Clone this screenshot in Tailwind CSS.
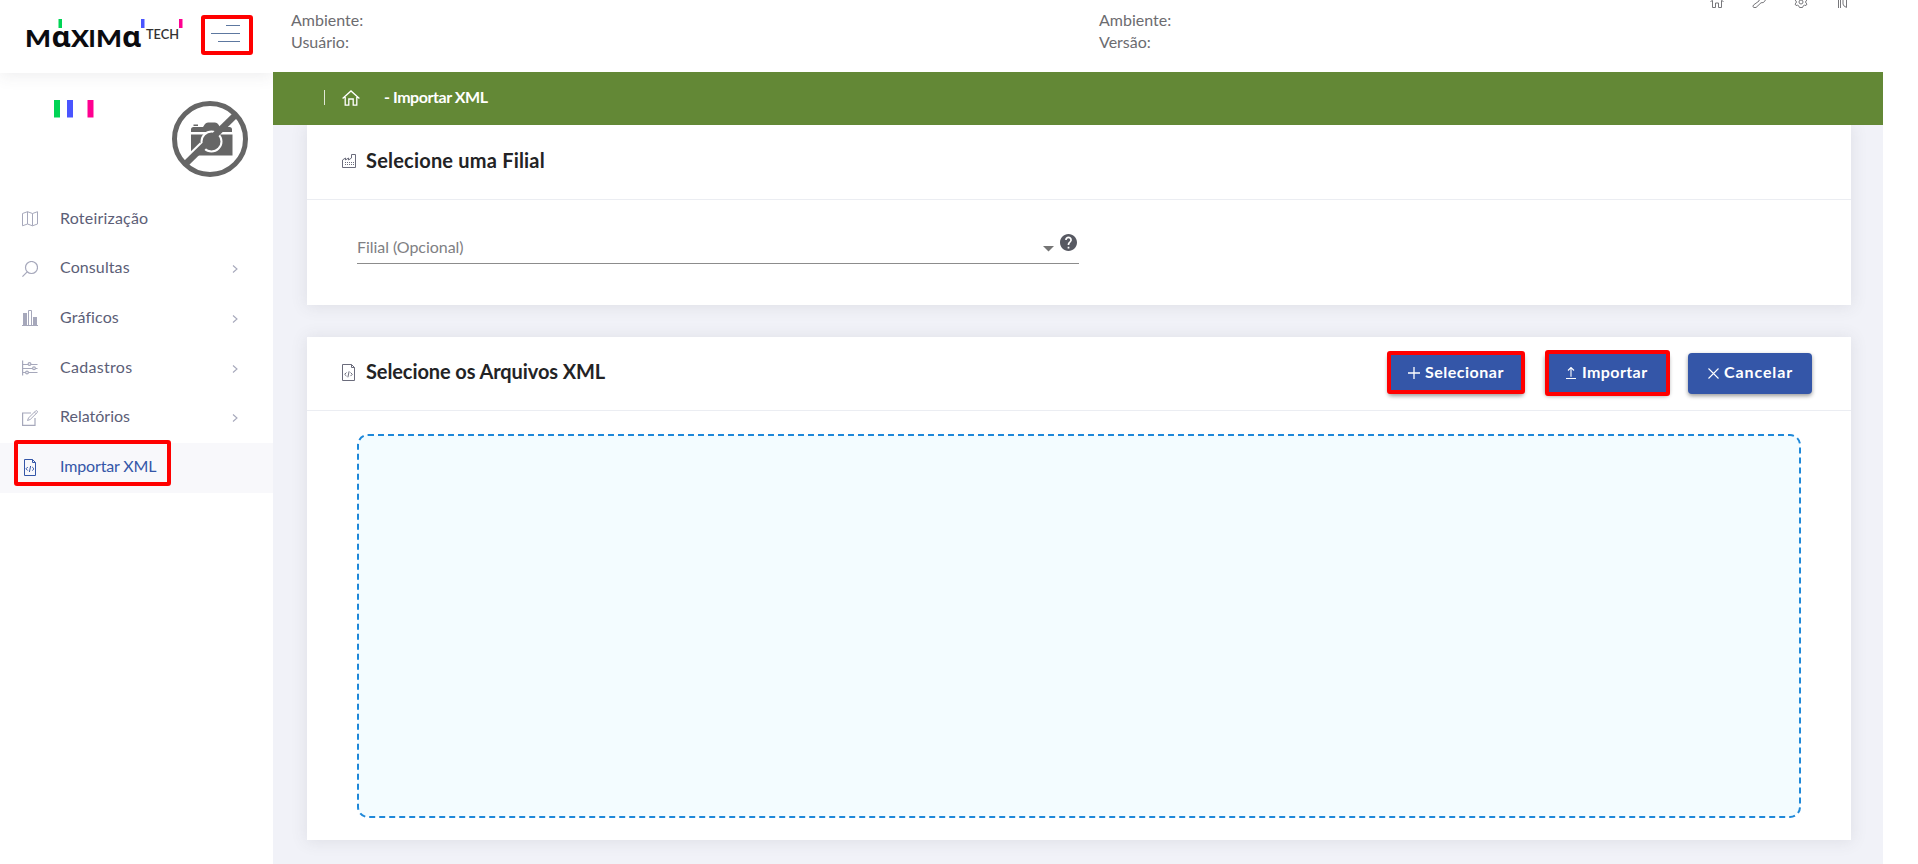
<!DOCTYPE html>
<html lang="pt-BR">
<head>
  <meta charset="utf-8">
  <title>Importar XML</title>
  <script src="https://cdn.jsdelivr.net/npm/@tailwindcss/browser@4"></script>
</head>
<body class="w-[1918px] h-[864px] overflow-hidden bg-white font-['Lato',sans-serif] flex flex-col">

  <!-- Top bar -->
  <header class="h-[72px] shrink-0 flex bg-white">
    <div class="relative z-10 w-[273px] h-[73px] shrink-0 bg-white shadow-[0_2px_16px_rgba(69,65,78,0.10)] flex [clip-path:inset(0_0_-30px_0)]">
      <svg class="w-[201px] h-[73px]" viewBox="0 0 201 73">
        <g fill="#0b0b0f" font-family="Lato, sans-serif" font-weight="900">
          <text x="25" y="46.500" font-size="23.5" textLength="26" lengthAdjust="spacingAndGlyphs">M</text>
          <text x="51.500" y="46.500" font-family="Noto Sans, sans-serif" font-weight="700" font-size="28" textLength="19" lengthAdjust="spacingAndGlyphs">ɑ</text>
          <text x="71" y="46.500" font-size="23.5" textLength="18" lengthAdjust="spacingAndGlyphs">X</text>
          <text x="88.500" y="46.500" font-size="23.5">I</text>
          <text x="96" y="46.500" font-size="23.5" textLength="26" lengthAdjust="spacingAndGlyphs">M</text>
          <text x="122" y="46.500" font-family="Noto Sans, sans-serif" font-weight="700" font-size="28" textLength="19" lengthAdjust="spacingAndGlyphs">ɑ</text>
        </g>
        <text x="146" y="39" fill="#333" font-family="Lato, sans-serif" font-weight="600" font-size="13" textLength="33" lengthAdjust="spacingAndGlyphs">TECH</text>
        <path fill="#00d455" d="M58.5 19h3.5v9h-3.5z"/>
        <path fill="#4a55ff" d="M141 19h3.5v9h-3.5z"/>
        <path fill="#ff0090" d="M179 19h3.5v9h-3.5z"/>
      </svg>
      <div class="mt-[15px] w-[52px] h-10 rounded-[3px] border-4 border-[#ff0000] flex flex-col items-end pt-[6px] pr-[9px] gap-[7px]">
        <span class="h-px w-[14px] bg-[#5d78a0]"></span>
        <span class="h-px w-[29px] bg-[#5d78a0]"></span>
        <span class="h-px w-[22px] bg-[#5d78a0]"></span>
      </div>
    </div>
    <div class="flex-1 flex pt-[9px] text-base leading-[22px] text-[#6c6c70]">
      <div class="w-[808px] pl-[18px]">
        <p>Ambiente:</p>
        <p>Usuário:</p>
      </div>
      <div class="w-[629px] pl-[18px]">
        <p>Ambiente:</p>
        <p>Versão:</p>
      </div>
      <div class="-mt-[9px] flex gap-[28px]">
        <svg class="w-[14px] h-2" viewBox="0 6 14 8" fill="none" stroke="#77777b"><path d="M.5 8 7 1.5 13.500 8M2.500 6.500v7h3V9h3v4.500h3v-7"/></svg>
        <svg class="w-[14px] h-2" viewBox="0 6 14 8" fill="none" stroke="#77777b"><path d="M7.500 4 7 7l-5.500 4q-1.500 2 .5 2.500h2L9 8.800l2.500-.3L13.500 6"/></svg>
        <svg class="w-[14px] h-2" viewBox="0 6 14 8" fill="none" stroke="#77777b"><circle cx="7" cy="8" r="2"/><path d="m1 6 1.200 1v2L1 10l1 1.500 1.500-.3 1.500 1 .5 1.300h3l.5-1.300 1.500-1 1.500.3 1-1.500-1.200-1V7L13 6"/></svg>
        <svg class="w-[14px] h-2" viewBox="0 6 14 8" fill="none" stroke="#77777b"><path d="M2.500 2v12M4.500 2v12M7 2v8q0 2 3.500 3.500V2"/></svg>
      </div>
    </div>
  </header>

  <div class="flex-1 flex min-h-0">

    <!-- Sidebar -->
    <aside class="w-[273px] shrink-0 bg-white text-[#5c5e77] text-base">
      <div class="h-[121px]">
        <svg class="w-[273px] h-[121px]" viewBox="0 72 273 121">
          <path fill="#00d455" d="M54 100h6v17.500h-6z"/>
          <path fill="#4a55ff" d="M67 100h6v17.500h-6z"/>
          <path fill="#ff0090" d="M87.500 100h6v17.500h-6z"/>
          <g fill="#666">
            <path d="M193.500 124.500h4.500v1.500h-4.500zM191 132v-2.500q0-2.500 2.500-2.500h9.500l2-3q1-1.500 3-1.500h7q2 0 3 1.500l2 3h9.500q2.500 0 2.500 2.500v2.500zM191 134.500h41.500v21h-41.500z"/>
            <circle cx="211.500" cy="141.500" r="10" stroke="#fff" stroke-width="2"/>
          </g>
          <path d="m184 160 17-16.500M219 122l14-14" stroke="#fff" stroke-width="3"/>
          <path d="m186 163.500 50-49" stroke="#666" stroke-width="6.500"/>
          <circle cx="210" cy="139" r="35.500" fill="none" stroke="#666" stroke-width="5"/>
        </svg>
      </div>
      <nav class="flex flex-col">
        <a class="h-[49.6px] flex items-center pl-[22px]">
          <svg class="w-4 h-4 mt-[3px] mr-[22px]" viewBox="0 0 16 16" fill="none" stroke="#a6a8bb"><path d="M.5 2.500 5.500.7l5 1.800 5-1.800V13l-5 1.800-5-1.800-5 1.800zM5.500.7V13M10.500 2.500v12.300"/></svg>
          <span class="tracking-[0.2px]">Roteirização</span>
        </a>
        <a class="h-[49.6px] flex items-center pl-[22px] pr-[35px]">
          <svg class="w-4 h-4 mt-[3px] mr-[22px]" viewBox="0 0 16 16" fill="none" stroke="#a6a8bb" stroke-width="1.200"><circle cx="9.500" cy="6.500" r="6"/><path d="M5.200 10.800.4 15.600"/></svg>
          <span class="flex-1 tracking-[0.1px]">Consultas</span>
          <svg class="w-[6px] h-2 mt-[4px]" viewBox="0 0 6 8" fill="none" stroke="#a6a8bb" stroke-width="1.100"><path d="m1 .5 4 3.500-4 3.500"/></svg>
        </a>
        <a class="h-[49.6px] flex items-center pl-[22px] pr-[35px]">
          <svg class="w-4 h-4 mt-[3px] mr-[22px]" viewBox="0 0 16 16" fill="#a6a8bb"><path d="M0 15h16v1H0zM1 3h4v12H1zM11 7h4v8h-4z"/><path d="M6.500.5h3v15h-3z" fill="none" stroke="#a6a8bb"/></svg>
          <span class="flex-1 tracking-[0.1px]">Gráficos</span>
          <svg class="w-[6px] h-2 mt-[4px]" viewBox="0 0 6 8" fill="none" stroke="#a6a8bb" stroke-width="1.100"><path d="m1 .5 4 3.500-4 3.500"/></svg>
        </a>
        <a class="h-[49.6px] flex items-center pl-[22px] pr-[35px]">
          <svg class="w-4 h-4 mt-[3px] mr-[22px]" viewBox="0 0 16 16" fill="none" stroke="#a6a8bb" stroke-width="1.200"><path d="M.6.500v15M1 4.500h5M9 4.500h6.500M1 8.500h9.500M13.500 8.500h2M1 12.500h2.500M6.500 12.500h9"/><circle cx="7.500" cy="4" r="1.400"/><circle cx="12" cy="8.300" r="1.400"/><circle cx="5" cy="12.500" r="1.400"/></svg>
          <span class="flex-1 tracking-[0.3px]">Cadastros</span>
          <svg class="w-[6px] h-2 mt-[4px]" viewBox="0 0 6 8" fill="none" stroke="#a6a8bb" stroke-width="1.100"><path d="m1 .5 4 3.500-4 3.500"/></svg>
        </a>
        <a class="h-[49.6px] flex items-center pl-[22px] pr-[35px]">
          <svg class="w-4 h-4 mt-[3px] mr-[22px]" viewBox="0 0 16 16" fill="none" stroke="#a6a8bb"><path stroke-width="1.200" d="M9 3H.6v12.400H13V8"/><path d="M5.500 10.500 6.500 8l7-7q1-.8 1.700 0 .7.700 0 1.600L8.200 9.500zM12.500 2.200l1.500 1.500"/></svg>
          <span class="flex-1">Relatórios</span>
          <svg class="w-[6px] h-2 mt-[4px]" viewBox="0 0 6 8" fill="none" stroke="#a6a8bb" stroke-width="1.100"><path d="m1 .5 4 3.500-4 3.500"/></svg>
        </a>
        <a class="relative h-[50px] mt-[2px] flex items-center pl-[22px] pb-[3px] bg-[#f8f8fb] text-[#3456a8]">
          <svg class="w-4 h-[17px] mt-[3px] mr-[22px]" viewBox="0 0 16 17" fill="none" stroke="#3456a8"><path d="M2.500.5h8l3 3v13h-11zM10.500.5v3h3M5.800 8 4 9.800l1.800 1.800M10.200 8l1.800 1.800-1.800 1.800M8.600 7l-1.200 6"/></svg>
          <span class="tracking-[-0.15px]">Importar XML</span>
          <span class="absolute left-[14px] -top-[3px] w-[157px] h-[46px] rounded-[3px] border-4 border-[#ff0000]"></span>
        </a>
      </nav>
    </aside>

    <!-- Content -->
    <main class="w-[1610px] bg-[#f1f2f8] flex flex-col overflow-hidden">
      <div class="relative z-10 h-[53px] shrink-0 bg-[#638836] text-white flex items-center pl-[51px] pb-[2px]">
        <span class="w-px h-[15px] bg-white/80"></span>
        <svg class="w-[18px] h-4 ml-[17px]" viewBox="0 0 18 16" fill="none" stroke="#fff" stroke-width="1.300"><path d="M.6 8.500 9 .9l8.400 7.600M3.200 7v8.200h3.600V9h4.400v6.200h3.600V7"/></svg>
        <span class="ml-[24px] pb-px text-base font-bold tracking-[-0.45px]">- Importar XML</span>
      </div>

      <section class="mx-[34px] mr-[32px] h-[180px] shrink-0 bg-white shadow-[0_1px_15px_1px_rgba(69,65,78,0.10)]">
        <div class="h-[75px] pb-[5px] border-b border-[#ebedf2] flex items-center pl-[35px]">
          <svg class="w-[14px] h-[14px] mt-[2px] mr-[10px]" viewBox="0 0 14 14" fill="none" stroke="#6b6c7c"><path d="M.5 13.500V6l3-2v2l3-2v2l3-2V.5h4v13z"/><path stroke-dasharray="1 1" d="M3 8.500h9M3 10.500h9"/></svg>
          <h3 class="text-xl font-bold tracking-[0.2px] text-[#232325]">Selecione uma Filial</h3>
        </div>
        <div class="ml-[50px] mt-[31px] w-[722px] h-[33px] border-b border-[#8c8c8c] flex">
          <span class="flex-1 pt-[4px] text-base leading-6 text-[#808083] tracking-[-0.05px]">Filial (Opcional)</span>
          <svg class="w-[11px] h-[6px] mt-[15px] mr-[6px]" viewBox="0 0 11 6"><path fill="#757575" d="M0 0h11L5.500 5.500z"/></svg>
          <svg class="w-[17px] h-[17px] mt-[3px] mr-[2px]" viewBox="2 2 20 20"><path fill="#575962" d="M12 2C6.480 2 2 6.480 2 12s4.480 10 10 10 10-4.480 10-10S17.520 2 12 2zm1 17h-2v-2h2v2zm2.070-7.750-.9.920C13.450 12.900 13 13.500 13 15h-2v-.5c0-1.100.45-2.100 1.170-2.830l1.240-1.260c.37-.36.590-.86.590-1.410 0-1.100-.9-2-2-2s-2 .9-2 2H8c0-2.210 1.790-4 4-4s4 1.790 4 4c0 .88-.36 1.680-.93 2.250z"/></svg>
        </div>
      </section>

      <section class="mt-[32px] mx-[34px] mr-[32px] h-[503px] shrink-0 bg-white shadow-[0_1px_15px_1px_rgba(69,65,78,0.10)]">
        <div class="h-[74px] border-b border-[#ebedf2] flex items-center pl-[35px] pr-[39px]">
          <svg class="w-[14px] h-[17px] mb-[2px] mr-[10px]" viewBox="0 0 14 17" fill="none" stroke="#6b6c7c"><path d="M.5.500h9l3 3v13H.5zM9.500.500v3h3M4.500 8.500 2.700 10.300l1.800 1.800M8.500 8.500l1.800 1.800-1.800 1.800M7.100 7.300l-1.200 6"/></svg>
          <h3 class="flex-1 pb-[6px] text-xl font-bold tracking-[-0.1px] text-[#232325]">Selecione os Arquivos XML</h3>
          <div class="flex text-base font-bold text-white">
            <button class="relative w-[136px] h-[41px] mr-[21px] rounded bg-[#3456a8] shadow-[0_2px_4px_rgba(0,0,0,0.4)] flex items-center pl-[20px] pb-[4px]">
              <svg class="w-3 h-3 mt-[3px] mr-[5px]" viewBox="0 0 12 12" stroke="#fff" stroke-width="1.300"><path d="M6 0v12M0 6h12"/></svg>
              <span class="tracking-[0.5px]">Selecionar</span>
              <span class="absolute -left-px -top-[2px] w-[138px] h-[43px] rounded-[3px] border-4 border-[#ff0000]"></span>
            </button>
            <button class="relative w-[124px] h-[41px] mr-[19px] rounded bg-[#3456a8] shadow-[0_2px_4px_rgba(0,0,0,0.4)] flex items-center pl-[21px] pb-[4px]">
              <svg class="w-[10px] h-3 mt-[3px] mr-[6px]" viewBox="0 0 10 12" fill="none" stroke="#fff" stroke-width="1.100"><path d="M5 .8v9M2 3.500l3-3 3 3M0 11.500h10"/></svg>
              <span class="tracking-[0.4px]">Importar</span>
              <span class="absolute left-0 -top-[3px] w-[125px] h-[46px] rounded-[3px] border-4 border-[#ff0000]"></span>
            </button>
            <button class="w-[124px] h-[41px] rounded bg-[#3456a8] shadow-[0_2px_4px_rgba(0,0,0,0.4)] flex items-center pl-[20px] pb-[4px]">
              <svg class="w-[11px] h-[11px] mt-[3px] mr-[5px]" viewBox="0 0 11 11" stroke="#fff" stroke-width="1.100"><path d="m.5.500 10 10M10.500.500l-10 10"/></svg>
              <span class="tracking-[0.9px]">Cancelar</span>
            </button>
          </div>
        </div>
        <div class="mx-[50px] mt-[23px] h-[384px]">
          <svg class="w-full h-full" viewBox="0 0 1444 384"><rect x="1" y="1" width="1442" height="382" rx="10" fill="#f3fcff" stroke="#1e88d9" stroke-width="2" stroke-dasharray="6 4"/></svg>
        </div>
      </section>
    </main>
  </div>
</body>
</html>
